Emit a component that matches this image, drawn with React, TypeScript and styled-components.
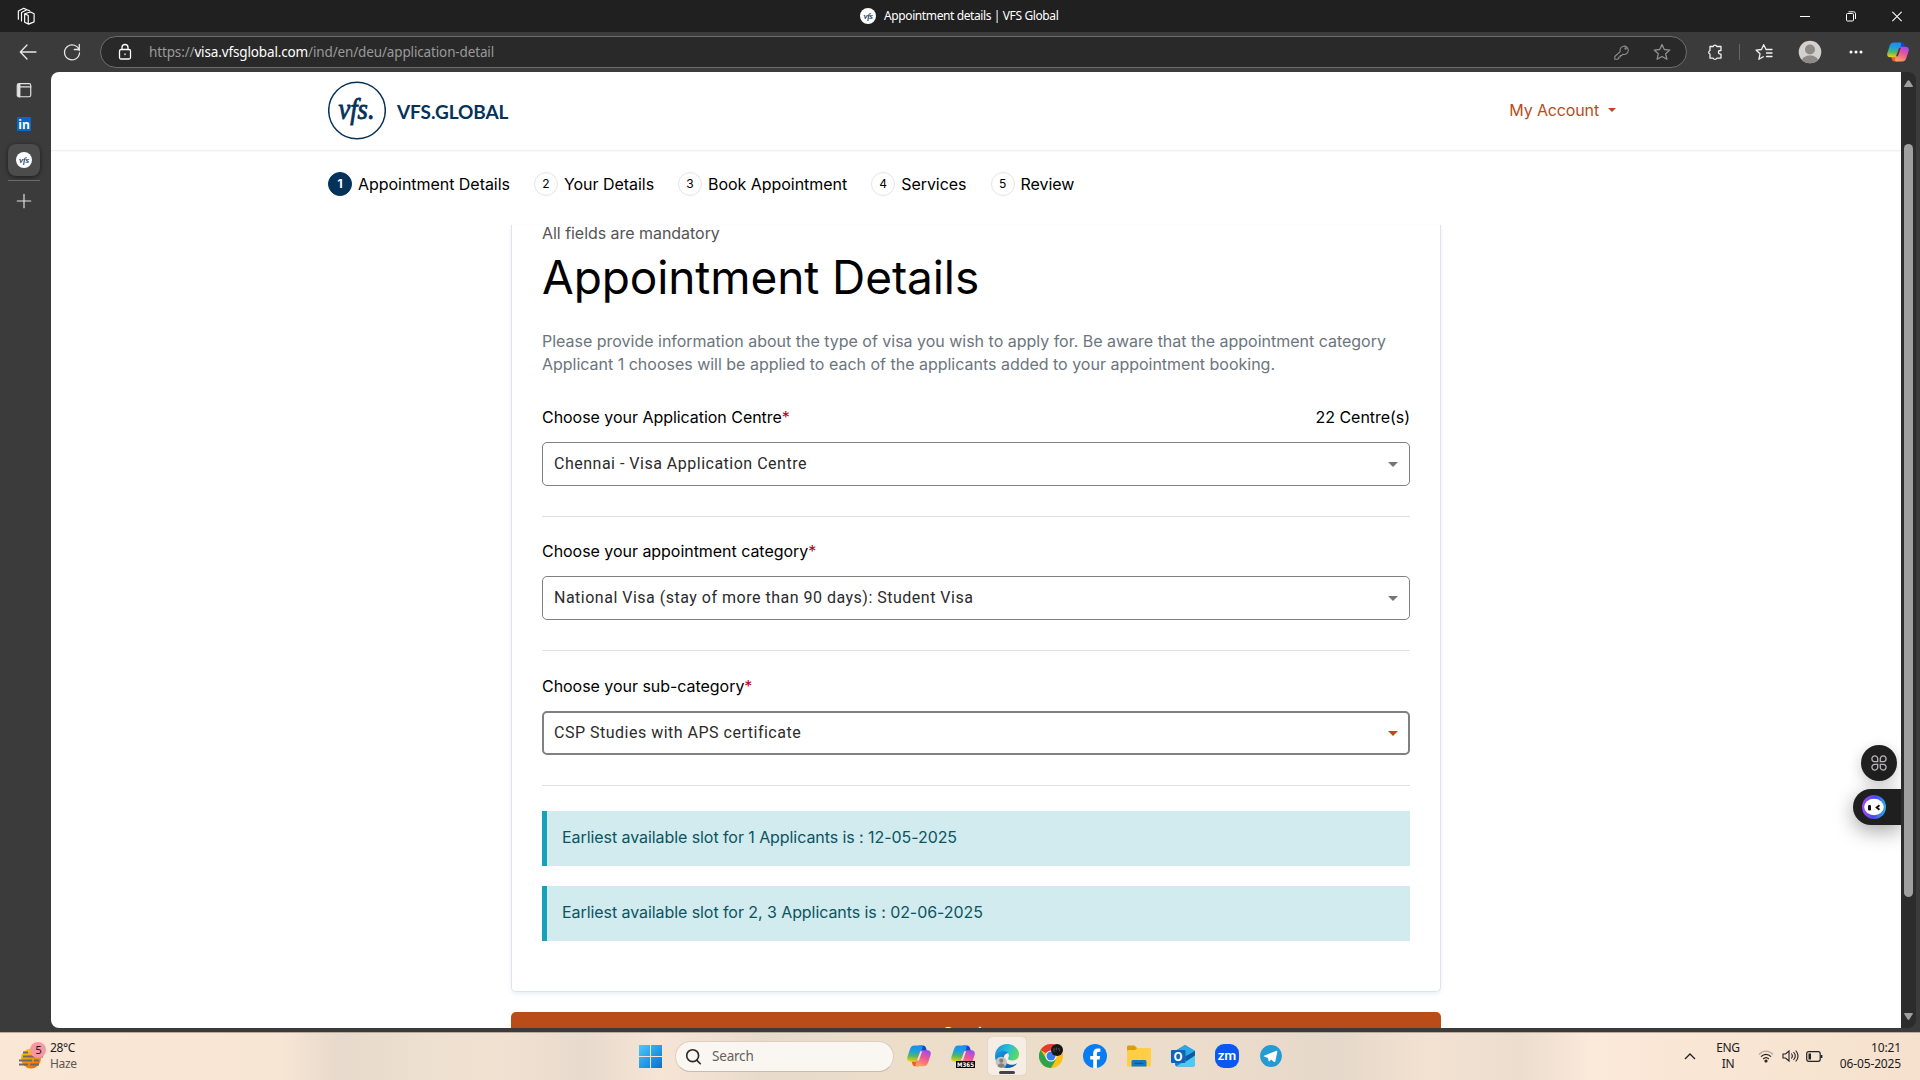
import React from "react";
import styled, { createGlobalStyle, css } from "styled-components";

const ui = `"Noto Sans", "Open Sans", sans-serif`;
const body = `Inter, "Liberation Sans", sans-serif`;
const navy = "#05325b";
const orange = "#b94c19";

const Global = createGlobalStyle`
  * { box-sizing: border-box; }
  html, body { margin: 0; padding: 0; overflow: hidden; }
  body { background: #3b3b3b; }
`;

const Screen = styled.div`
  width: 1920px;
  height: 1080px;
  display: flex;
  flex-direction: column;
  overflow: hidden;
  background: #3b3b3b;
  font-family: ${body};
`;

/* ---------- browser chrome ---------- */
const TitleBar = styled.header`
  height: 32px;
  flex: none;
  display: grid;
  grid-template-columns: 860px 1fr 138px;
  align-items: center;
  background: #202020;
  color: #fff;
`;
const WorkspaceSlot = styled.div`
  padding-left: 17px;
  display: flex;
`;
const TabTitle = styled.div`
  display: flex;
  align-items: center;
  gap: 8px;
  font: 12px/16px ${ui};
  letter-spacing: -0.39px;
  white-space: nowrap;
`;
const WindowButtons = styled.div`
  display: flex;
`;
const WindowButton = styled.span`
  width: 46px;
  display: flex;
  justify-content: center;
`;
const Toolbar = styled.div`
  height: 40px;
  flex: none;
  display: flex;
  align-items: center;
  background: #3b3b3b;
  color: #e8e8e8;
`;
const ToolSlot = styled.span<{ $w: number }>`
  width: ${(p) => p.$w}px;
  flex: none;
  display: flex;
  align-items: center;
  justify-content: center;
`;
const AddressBar = styled.div`
  width: 1587px;
  height: 32px;
  border: 1px solid #6d6d6d;
  border-radius: 16px;
  background: #292929;
  display: flex;
  align-items: center;
  color: #8f8f8f;
`;
const Url = styled.span`
  flex: 1;
  font: 13.5px/20px ${ui};
  letter-spacing: -0.14px;
  color: #9a9a9a;
  white-space: nowrap;
  b { font-weight: 400; color: #fff; }
`;
const Separator = styled.span`
  width: 1px;
  height: 16px;
  background: #666;
`;
const Work = styled.div`
  height: 960px;
  flex: none;
  display: flex;
  padding-bottom: 4px;
`;
const Sidebar = styled.nav`
  width: 51px;
  flex: none;
  display: flex;
  flex-direction: column;
  align-items: flex-start;
  padding: 10px 0 0 8px;
  color: #e4e4e4;
`;
const SideSlot = styled.span<{ $h: number; $active?: boolean }>`
  width: 32px;
  height: ${(p) => p.$h}px;
  display: flex;
  align-items: center;
  justify-content: center;
  border-radius: 8px;
  ${(p) => p.$active && css`
    margin-top: -6px;
    background: #4c4c4c;
    box-shadow: 0 1px 4px rgba(0, 0, 0, 0.55);
  `}
`;
const SideLine = styled.span`
  width: 32px;
  height: 1px;
  margin: 4px 0;
  background: #6b6b6b;
`;

/* ---------- page ---------- */
const Page = styled.main`
  position: relative;
  width: 1850px;
  height: 956px;
  overflow: hidden;
  background: #fff;
  border-radius: 8px 0 0 8px;
`;
const ScrollTrack = styled.div`
  width: 15px;
  height: 956px;
  background: #2c2c2c;
  border-radius: 0 8px 8px 0;
  display: flex;
  flex-direction: column;
  align-items: center;
  padding: 8px 0;
`;
const ScrollThumb = styled.div`
  width: 9px;
  height: 753px;
  margin: 57px 0 auto;
  border-radius: 5px;
  background: #9f9f9f;
`;
const SiteHeader = styled.div`
  height: 79px;
  padding: 0 285px 2px 277px;
  display: flex;
  align-items: center;
  justify-content: space-between;
  border-bottom: 1px solid #f1f1f1;
  box-shadow: 0 1px 1px #fafafa;
`;
const Brand = styled.div`
  display: flex;
  align-items: center;
  gap: 11px;
  color: ${navy};
`;
const BrandName = styled.span`
  font: 700 19px/24px Lato, sans-serif;
  letter-spacing: -0.1px;
  margin-top: 3px;
`;
const Account = styled.div`
  display: flex;
  align-items: center;
  gap: 9px;
  color: ${orange};
  font-size: 16px;
  letter-spacing: -0.14px;
`;
const Steps = styled.ol`
  height: 74px;
  margin: 0;
  padding: 0 0 9px 277px;
  list-style: none;
  display: flex;
  align-items: center;
  gap: 24px;
`;
const Step = styled.li`
  display: flex;
  align-items: center;
  gap: 6px;
  font-size: 16px;
  line-height: 24px;
  letter-spacing: -0.04px;
  color: #000;
  white-space: nowrap;
`;
const StepNo = styled.span<{ $on?: boolean }>`
  width: 24px;
  height: 24px;
  border-radius: 50%;
  display: flex;
  align-items: center;
  justify-content: center;
  font-size: 12px;
  border: 1px solid ${(p) => (p.$on ? navy : "#e4e4e4")};
  background: ${(p) => (p.$on ? navy : "#fff")};
  color: ${(p) => (p.$on ? "#fff" : "#000")};
  font-weight: ${(p) => (p.$on ? 700 : 400)};
`;
const Column = styled.div`
  width: 930px;
  margin-left: 460px;
`;
const Card = styled.section`
  height: 767px;
  padding: 0 30px;
  border: 1px solid #dfe3ec;
  border-top: 0;
  border-radius: 0 0 5px 5px;
  box-shadow: 0 2px 4px rgba(40, 70, 120, 0.09);
`;
const Hint = styled.p`
  margin: 0;
  font-size: 16px;
  line-height: 17px;
  letter-spacing: -0.04px;
  color: #555;
`;
const Heading = styled.h1`
  margin: 7px 0 0;
  font-size: 46px;
  line-height: 56px;
  letter-spacing: -0.1px;
  font-weight: 400;
  color: #000;
  white-space: nowrap;
`;
const Lead = styled.p`
  margin: 25px 0 0;
  font-size: 16px;
  line-height: 23px;
  letter-spacing: -0.01px;
  color: #6c757d;
  white-space: nowrap;
`;
const Field = styled.div<{ $h: number }>`
  height: ${(p) => p.$h}px;
  border-bottom: 1px solid #dfdfdf;
  display: flex;
  flex-direction: column;
  justify-content: flex-end;
  padding-bottom: 30px;
`;
const LabelRow = styled.div`
  display: flex;
  justify-content: space-between;
  font-size: 16px;
  line-height: 20px;
  letter-spacing: -0.04px;
  margin-bottom: 15px;
  color: #000;
`;
const Star = styled.span`
  color: #b3001b;
`;
const Select = styled.div<{ $focus?: boolean }>`
  height: 44px;
  border: ${(p) => (p.$focus ? 2 : 1)}px solid #808080;
  border-radius: 5px;
  display: flex;
  align-items: center;
  justify-content: space-between;
  padding: 0 ${(p) => (p.$focus ? 10 : 11)}px;
  font: 16px/24px Roboto, sans-serif;
  letter-spacing: 0.5px;
  color: #2b2b2b;
`;
const Caret = styled.i<{ $c: string; $w?: number }>`
  border: ${(p) => p.$w ?? 5}px solid transparent;
  border-top-color: ${(p) => p.$c};
  border-bottom: 0;
`;
const Alert = styled.div<{ $gap: number }>`
  height: 55px;
  margin-top: ${(p) => p.$gap}px;
  padding: 0 0 3px 15px;
  border-left: 5px solid #18a2b8;
  background: #d1ebef;
  color: #0c5460;
  font-size: 16px;
  letter-spacing: -0.07px;
  display: flex;
  align-items: center;
`;
const Continue = styled.button`
  display: block;
  width: 930px;
  height: 48px;
  margin-top: 20px;
  padding: 0 0 6px;
  border: 0;
  border-radius: 5px;
  background: ${orange};
  color: #fff;
  font: 16px/20px ${body};
`;
const FloatDock = styled.div`
  position: absolute;
  right: 0;
  top: 673px;
  display: flex;
  flex-direction: column;
  align-items: flex-end;
  gap: 8px;
`;
const FloatRound = styled.div`
  width: 36px;
  height: 36px;
  margin-right: 4px;
  border-radius: 50%;
  background: #1f1f1f;
  box-shadow: 0 4px 14px rgba(0, 0, 0, 0.22);
  display: flex;
  align-items: center;
  justify-content: center;
`;
const FloatTab = styled.div`
  width: 48px;
  height: 36px;
  padding-left: 9px;
  border-radius: 18px 0 0 18px;
  background: #1f1f1f;
  box-shadow: 0 6px 20px rgba(0, 0, 0, 0.35);
  display: flex;
  align-items: center;
`;

/* ---------- taskbar ---------- */
const Taskbar = styled.footer`
  height: 48px;
  flex: none;
  display: flex;
  align-items: center;
  border-top: 1px solid #b9aa9d;
  padding-bottom: 1px;
  font-family: ${ui};
  color: #1c1c1c;
  background: linear-gradient(90deg, #fae7d6 0, #f8e6d5 280px, #e7d9cb 340px, #eee0d0 420px, #f1e1d1 500px,
    #e8dacd 585px, #f6e5d5 660px, #e8dacb 765px, #ecdec9 900px, #ecdccb 1200px, #e6d8ca 1340px, #f3e2d1 1430px,
    #ecddcf 1520px, #fbe9d9 1590px, #f5e1cd 1920px);
`;
const Weather = styled.div`
  width: 639px;
  padding-left: 19px;
  display: flex;
  gap: 3px;
  align-items: center;
`;
const Small = styled.div<{ $align?: string; $w?: number; $ls?: number }>`
  font-size: 12px;
  line-height: 16px;
  letter-spacing: ${(p) => p.$ls ?? -0.35}px;
  text-align: ${(p) => p.$align ?? "left"};
  width: ${(p) => (p.$w ? `${p.$w}px` : "auto")};
  white-space: nowrap;
`;
const Muted = styled.div`
  color: #5d5751;
`;
const SearchBox = styled.div`
  width: 219px;
  height: 31px;
  margin: 0 3px 0 13px;
  padding-left: 9px;
  display: flex;
  align-items: center;
  gap: 10px;
  border-radius: 16px;
  border: 1px solid #dccfc2;
  border-bottom-color: #c9bcae;
  background: #faf6f1;
  color: #65605b;
  font-size: 13.5px;
  letter-spacing: -0.2px;
`;
const AppSlot = styled.span<{ $active?: boolean }>`
  position: relative;
  width: 38px;
  height: 38px;
  margin: 0 3px;
  border-radius: 4px;
  display: flex;
  align-items: center;
  justify-content: center;
  ${(p) => p.$active && css`
    background: #f6eee5;
    box-shadow: 0 0 1px #b8a999;
    &::after {
      content: "";
      position: absolute;
      left: 11px;
      bottom: 1px;
      width: 16px;
      height: 3px;
      border-radius: 2px;
      background: #444;
    }
  `}
`;
const Tray = styled.div`
  margin-left: auto;
  display: flex;
  align-items: center;
  padding-right: 19px;
`;

/* ---------- drawings ---------- */
const Line = ({ s = 20, w = 1.3, children, c = "currentColor" }: any) => (
  <svg width={s} height={s} viewBox="0 0 20 20" fill="none" stroke={c} strokeWidth={w} strokeLinecap="round" strokeLinejoin="round">
    {children}
  </svg>
);

const Favicon = ({ s = 16 }: { s?: number }) => (
  <svg width={s} height={s} viewBox="0 0 16 16">
    <circle cx="8" cy="8" r="8" fill="#fff" />
    <text x="8" y="10.6" textAnchor="middle" fontFamily="Liberation Serif" fontStyle="italic" fontSize="9" fill={navy} stroke={navy} strokeWidth="0.2">vfs</text>
  </svg>
);

const BrandMark = () => (
  <svg width="58" height="59" viewBox="0 0 58 59">
    <circle cx="29" cy="29.5" r="28.3" fill="none" stroke={navy} strokeWidth="1.5" />
    <text x="10.500" y="37.500" textLength="36" lengthAdjust="spacingAndGlyphs" fontFamily="Liberation Serif" fontStyle="italic" fontSize="30" fill={navy} stroke={navy} strokeWidth="0.900">vfs.</text>
  </svg>
);

const Copilot = ({ id, s = 24, label }: { id: string; s?: number; label?: boolean }) => (
  <svg width={s} height={s} viewBox="0 0 24 24">
    <defs>
      <linearGradient id={id + "a"} x1="0.4" y1="0" x2="0.3" y2="1">
        <stop offset="0" stopColor="#1b8df0" />
        <stop offset="0.35" stopColor="#1aa3d8" />
        <stop offset="0.65" stopColor="#55b860" />
        <stop offset="1" stopColor="#fbd00c" />
      </linearGradient>
      <linearGradient id={id + "b"} x1="0.7" y1="0" x2="0.3" y2="1">
        <stop offset="0" stopColor="#9b4bf0" />
        <stop offset="0.45" stopColor="#ee5597" />
        <stop offset="1" stopColor="#ffa25c" />
      </linearGradient>
    </defs>
    <path d="M12 1.500h4c1.600 0 2.500.9 3 2.500l1.200 4h-5.400z" fill="#1846c7" />
    <path d="M12 22.300H8.300c-1.600 0-2.400-.8-2.900-2.400L4.300 16h5.500z" fill="#f4582f" />
    <path d="M7.500 1.500h6.300c1.400 0 2 1 1.600 2.400l-3.500 11.400c-.5 1.600-1.500 2.500-3.100 2.500H3.500C.8 17.800-.3 15.800.4 13L3 5c.8-2.400 2.200-3.500 4.500-3.500z" fill={`url(#${id}a)`} />
    <path d="M16.500 22.300h-6.300c-1.400 0-2-1-1.600-2.400L12.100 8.700c.5-1.600 1.500-2.500 3.100-2.500h5.300c2.700 0 3.800 2 3.100 4.800L21 18.800c-.8 2.400-2.200 3.500-4.500 3.500z" fill={`url(#${id}b)`} />
    <path d="M13.300 7.300h1.800l-3.200 9.200h-2z" fill={s === 24 ? "#efe3d4" : "#3b3b3b"} />
    {label && (
      <>
        <rect x="5" y="17" width="19" height="7" fill="#000" />
        <text x="14.500" y="23" textAnchor="middle" fontFamily="DejaVu Sans" fontWeight="700" fontSize="6.300" textLength="17" lengthAdjust="spacingAndGlyphs" fill="#fff">M365</text>
      </>
    )}
  </svg>
);

const Edge = () => (
  <svg width="24" height="24" viewBox="0 0 24 24">
    <defs>
      <linearGradient id="edgeTop" x1="0" y1="0.300" x2="1" y2="0.600">
        <stop offset="0" stopColor="#1995dc" />
        <stop offset="0.500" stopColor="#27bfd8" />
        <stop offset="1" stopColor="#62dd55" />
      </linearGradient>
      <linearGradient id="edgeLow" x1="0" y1="0" x2="1" y2="1">
        <stop offset="0" stopColor="#1b9be4" />
        <stop offset="1" stopColor="#0c4f9e" />
      </linearGradient>
    </defs>
    <path d="M0 12C0 5 5.300 0 12 0s12 4.800 12 10.200c0 4-3 6.300-6.500 6.300-3 0-4.500-1-4.500-2 0-.8.900-1.200.9-3C13.900 9 11.400 7 8 7c-4.200 0-7 2.500-8 5z" fill="url(#edgeTop)" />
    <path d="M0 12c.8-3 4-5.200 8-5.200 2.600 0 4.700 1 5.500 2.500-3-.2-4.700 2.200-4.700 5 0 4.200 4 6.500 8 6.500 2.300 0 4.200-.8 5.400-1.600C20.200 22.200 16.500 24 12 24 5 24 0 18.800 0 12z" fill="url(#edgeLow)" />
    <circle cx="6.300" cy="18.300" r="5.600" fill="#c5c3c0" />
    <circle cx="6.300" cy="16.700" r="2.100" fill="#83807d" />
    <path d="M2.800 22.200c.3-4 6.700-4 7 0-2 1.900-5 1.900-7 0z" fill="#83807d" />
  </svg>
);

const Chrome = () => (
  <svg width="24" height="24" viewBox="0 0 24 24">
    <circle cx="12" cy="12" r="12" fill="#fbc116" />
    <path d="M12 12 1.600 6A12 12 0 0 1 22.400 6L12 6.500z" fill="#e33b2e" />
    <path d="M1.600 6A12 12 0 0 0 12 24l5.200-9-5.200 2.400L7 14z" fill="#2ea24c" />
    <circle cx="12" cy="12" r="5.600" fill="#fff" />
    <circle cx="12" cy="12" r="4.500" fill="#3b7ded" />
    <circle cx="18" cy="6" r="6" fill="#161616" />
    <path d="M15 4v4M17.300 3.500v2.800M19.500 4l1.300 3" stroke="#666" strokeWidth="0.800" />
  </svg>
);

const Facebook = () => (
  <svg width="24" height="24" viewBox="0 0 24 24">
    <circle cx="12" cy="12" r="12" fill="#0a7cf2" />
    <path d="M16.600 15.400l.6-3.500h-3.300V9.700c0-1 .5-1.900 2-1.900h1.500v-3s-1.400-.2-2.700-.2c-2.800 0-4.500 1.700-4.500 4.700v2.600h-3v3.500h3V24h3.700v-8.600z" fill="#fff" />
  </svg>
);

const Folder = () => (
  <svg width="24" height="24" viewBox="0 0 24 24">
    <path d="M0 3c0-1 .6-1.500 1.500-1.500h6L10 4h12.500c1 0 1.500.6 1.500 1.500V9H0z" fill="#dc9d08" />
    <path d="M0 7.500C0 6.500.5 6 1.500 6H8l2.300-2h12.200c1 0 1.500.6 1.500 1.500V21c0 1-.6 1.500-1.500 1.500h-21C.6 22.500 0 22 0 21z" fill="#fecf45" />
    <path d="M4.500 22.500v-4.800c0-1 .7-1.700 1.700-1.700h11.600c1 0 1.700.7 1.700 1.700v4.800z" fill="#1778c0" />
    <path d="M8 19.300h8" stroke="#0d5796" strokeWidth="1.300" strokeLinecap="round" />
  </svg>
);

const Outlook = () => (
  <svg width="24" height="24" viewBox="0 0 24 24">
    <path d="M4 7 14 1l10 6v13c0 1.500-.7 2.500-2 2.500H6c-1.300 0-2-1-2-2.500z" fill="#1481d0" />
    <path d="M14 1l10 6-10 8-9-8z" fill="#29a9e6" />
    <path d="M24 10v10.500c0 1.200-.8 2-2 2H5z" fill="#4cc9f5" />
    <path d="M14 12.500l10-5.500v4.500l-9 6z" fill="#0c5aa5" />
    <rect x="0" y="6" width="14.500" height="13" rx="1" fill="#0e65b8" />
    <text x="7.200" y="16.500" textAnchor="middle" fontFamily="Open Sans" fontWeight="700" fontSize="11.500" fill="#fff">O</text>
  </svg>
);

const Zoom = () => (
  <svg width="24" height="24" viewBox="0 0 24 24">
    <rect width="24" height="24" rx="9" fill="#0b57f2" />
    <text x="2.800" y="16" fontFamily="Lato" fontWeight="700" fontSize="13.500" fill="#fff" textLength="18.500" lengthAdjust="spacingAndGlyphs">zm</text>
  </svg>
);

const Telegram = () => (
  <svg width="24" height="24" viewBox="0 0 24 24">
    <circle cx="12" cy="12" r="10.900" fill="#249bd2" />
    <path d="M5 11.700 17.500 6.800c.6-.2 1 .1.800.9l-2 9.700c-.2.700-.7.800-1.200.5l-3-2.300-1.600 1.600c-.5.400-.8.100-.9-.4l-.7-2.900-3.800-1.300c-.6-.2-.6-.7-.1-.9z" fill="#fff" />
  </svg>
);

const Haze = () => (
  <svg width="28" height="28" viewBox="0 0 28 28">
    <defs>
      <linearGradient id="sun" x1="0.300" y1="0" x2="0.700" y2="1">
        <stop offset="0" stopColor="#fdc81c" />
        <stop offset="1" stopColor="#ea6a05" />
      </linearGradient>
    </defs>
    <circle cx="12" cy="16.500" r="10" fill="url(#sun)" />
    <path d="M4 10.500h5M4 14.500h14M19 14.500h5M0 18.500h13M15 18.500h5M0 22.500h9M11 22.500h9" stroke="#6f6a65" strokeWidth="1.900" />
    <circle cx="19" cy="8" r="8" fill="#fa97a3" />
    <text x="19.500" y="12" textAnchor="middle" fontFamily="Noto Sans" fontSize="11.500" fill="#1a1a1a">5</text>
  </svg>
);

const Bot = () => (
  <svg width="24" height="24" viewBox="0 0 24 24">
    <defs>
      <linearGradient id="ring" x1="0" y1="0.600" x2="1" y2="0.700">
        <stop offset="0" stopColor="#a44df0" />
        <stop offset="0.500" stopColor="#4948f2" />
        <stop offset="1" stopColor="#25b4e8" />
      </linearGradient>
    </defs>
    <circle cx="12" cy="12" r="12" fill="url(#ring)" />
    <ellipse cx="12" cy="12" rx="9.800" ry="8.300" fill="#fff" />
    <rect x="6" y="10" width="3" height="5.500" rx="1.200" fill="#111" />
    <path d="M17.500 10.300 14.700 12.500l2.800 2.200" fill="none" stroke="#111" strokeWidth="1.900" />
  </svg>
);

const STEPS = ["Appointment Details", "Your Details", "Book Appointment", "Services", "Review"];
const FIELDS = [
  { label: "Choose your Application Centre", value: "Chennai - Visa Application Centre", note: "22 Centre(s)", h: 141 },
  { label: "Choose your appointment category", value: "National Visa (stay of more than 90 days): Student Visa", h: 134 },
  { label: "Choose your sub-category", value: "CSP Studies with APS certificate", h: 135, focus: true },
];
const APPS = [<Edge />, <Chrome />, <Facebook />, <Folder />, <Outlook />, <Zoom />, <Telegram />];

export default function App() {
  return (
    <Screen>
      <Global />
      <TitleBar>
        <WorkspaceSlot>
          <Line s={18} w={1.3}>
            <path d="M8.500 7.500 15 5.500l4 2v9l-6 2.500-4.500-2zM8.500 7.500l4 2v9M5 15.500V6l6-3 3 1.200M1.500 13.500V4.500L7.500 1.500l3 1.200" />
          </Line>
        </WorkspaceSlot>
        <TabTitle><Favicon />Appointment details | VFS Global</TabTitle>
        <WindowButtons>
          <WindowButton><svg width="10" height="11"><path d="M0 5.500h10" stroke="#fff" /></svg></WindowButton>
          <WindowButton>
            <svg width="10" height="11" fill="none" stroke="#fff"><rect x=".5" y="2.500" width="7" height="7.500" rx="1" /><path d="M2.500.8h5c1.300 0 2 .7 2 2V8" /></svg>
          </WindowButton>
          <WindowButton><svg width="10" height="11"><path d="M.3.800l9.400 9.400M9.700.8.3 10.200" stroke="#fff" strokeWidth="1.200" /></svg></WindowButton>
        </WindowButtons>
      </TitleBar>

      <Toolbar>
        <ToolSlot $w={56}><Line s={20}><path d="M18 10H2.500M9 3 2.300 10 9 17" /></Line></ToolSlot>
        <ToolSlot $w={32}><Line s={20}><path d="M17.300 8.500A7.500 7.500 0 1 0 17.500 11M17.300 2.500v5h-5" /></Line></ToolSlot>
        <ToolSlot $w={12} />
        <AddressBar>
          <ToolSlot $w={48}><Line s={20} c="#fff"><rect x="4.500" y="7.500" width="11" height="9.500" rx="1.500" /><path d="M7 7.500V5.500a3 3 0 0 1 6 0v2M10 12v.5" /></Line></ToolSlot>
          <Url>https://<b>visa.vfsglobal.com</b>/ind/en/deu/application-detail</Url>
          <ToolSlot $w={40}><Line s={18} w={1.200}><path d="M8 9.500a4.600 4.600 0 1 1 3 3L9.500 14H8v1.500H6.500V17L5 18H2v-3z" /><circle cx="14" cy="6" r=".7" /></Line></ToolSlot>
          <ToolSlot $w={40}><Line s={20}><path d="M10 2.500l2.300 5 5.500.6-4.100 3.700 1.200 5.500-4.900-2.800-4.900 2.800 1.200-5.500L2.200 8.100l5.500-.6z" /></Line></ToolSlot>
          <ToolSlot $w={4} />
        </AddressBar>
        <ToolSlot $w={7} />
        <ToolSlot $w={42}>
          <Line s={20} c="#f2f2f2"><path d="M5 4.500h3.200a1.900 1.900 0 0 1 3.600 0H16V8.500h-.8a1.800 1.800 0 0 0 0 3.600h.8v4h-4.200a1.900 1.900 0 0 1-3.600 0H5v-4a1.900 1.900 0 0 1 0-3.600z" /></Line>
        </ToolSlot>
        <ToolSlot $w={6}><Separator /></ToolSlot>
        <ToolSlot $w={44}>
          <Line s={20} c="#f2f2f2"><path d="M13 7.500h-.9L9.700 2.700 7.500 7.500l-5.500.6 4 3.700L4.900 17.300l4.400-2.500M12 7.500h6M12.500 11h5.500M12.500 14.500h5.500" /></Line>
        </ToolSlot>
        <ToolSlot $w={48}>
          <svg width="24" height="24"><circle cx="12" cy="12" r="11.300" fill="#d3d1ce" /><circle cx="12" cy="9.500" r="5" fill="#8d8a87" /><path d="M4 20c1.500-6 14.500-6 16 0-4 4.300-12 4.300-16 0z" fill="#8d8a87" /></svg>
        </ToolSlot>
        <ToolSlot $w={44}><svg width="14" height="4" fill="#fff"><circle cx="2" cy="2" r="1.500" /><circle cx="7" cy="2" r="1.500" /><circle cx="12" cy="2" r="1.500" /></svg></ToolSlot>
        <ToolSlot $w={40}><Copilot id="tb" s={22} /></ToolSlot>
      </Toolbar>

      <Work>
        <Sidebar>
          <SideSlot $h={16}><Line s={18}><rect x="2.500" y="3" width="15" height="14.500" rx="2" /><path d="M3.700 4v12.500M5.200 3v14.500M5.500 6.500h12" strokeWidth="1.600" /></Line></SideSlot>
          <SideSlot $h={52}>
            <svg width="14" height="14"><rect width="14" height="14" rx="1" fill="#0a66c8" /><text x="7" y="11.500" textAnchor="middle" fontFamily="Open Sans" fontWeight="700" fontSize="12" fill="#fff">in</text></svg>
          </SideSlot>
          <SideSlot $h={32} $active><Favicon /></SideSlot>
          <SideLine />
          <SideSlot $h={31}><Line s={18}><path d="M10 2.500v15M2.500 10h15" /></Line></SideSlot>
        </Sidebar>

        <Page>
          <SiteHeader>
            <Brand><BrandMark /><BrandName>VFS.GLOBAL</BrandName></Brand>
            <Account>My Account<Caret $c={orange} $w={4} /></Account>
          </SiteHeader>
          <Steps>
            {STEPS.map((s, i) => (
              <Step key={s}><StepNo $on={i === 0}>{i + 1}</StepNo>{s}</Step>
            ))}
          </Steps>
          <Column>
            <Card>
              <Hint>All fields are mandatory</Hint>
              <Heading>Appointment Details</Heading>
              <Lead>
                Please provide information about the type of visa you wish to apply for. Be aware that the appointment category<br />
                Applicant 1 chooses will be applied to each of the applicants added to your appointment booking.
              </Lead>
              {FIELDS.map((f) => (
                <Field key={f.label} $h={f.h}>
                  <LabelRow><span>{f.label}<Star>*</Star></span><span>{f.note}</span></LabelRow>
                  <Select $focus={f.focus}>{f.value}<Caret $c={f.focus ? orange : "#757575"} /></Select>
                </Field>
              ))}
              <Alert $gap={25}>Earliest available slot for 1 Applicants is : 12-05-2025</Alert>
              <Alert $gap={20}>Earliest available slot for 2, 3 Applicants is : 02-06-2025</Alert>
            </Card>
            <Continue>Continue</Continue>
          </Column>
          <FloatDock>
            <FloatRound>
              <svg width="16" height="16" viewBox="0 0 16 16" fill="none" stroke="#b9b4b9" strokeWidth="1.300">
                <path d="M6.700 6.700H4A2.900 2.900 0 1 1 6.700 4zM9.300 6.700H12A2.900 2.900 0 1 0 9.300 4zM6.700 9.300H4A2.900 2.900 0 1 0 6.700 12zM9.300 9.300H12A2.900 2.900 0 1 1 9.300 12z" />
              </svg>
            </FloatRound>
            <FloatTab><Bot /></FloatTab>
          </FloatDock>
        </Page>
        <ScrollTrack>
          <svg width="9" height="7"><path d="M3.500.8q1-1 2 0L8.800 6q.3 1-.8 1H1Q-.1 7 .2 6z" fill="#9f9f9f" /></svg>
          <ScrollThumb />
          <svg width="9" height="7"><path d="M3.500 6.200q1 1 2 0L8.800 1Q9.100 0 8 0H1Q-.1 0 .2 1z" fill="#9f9f9f" /></svg>
        </ScrollTrack>
      </Work>

      <Taskbar>
        <Weather>
          <Haze />
          <Small>28°C<Muted>Haze</Muted></Small>
        </Weather>
        <svg width="23" height="23" viewBox="0 0 23 23">
          <defs><linearGradient id="win" x1="0" y1="0" x2="1" y2="1"><stop offset="0" stopColor="#4cc9fa" /><stop offset="1" stopColor="#0571cf" /></linearGradient></defs>
          <path d="M0 0h11v11H0zM12 0h11v11H12zM0 12h11v11H0zM12 12h11v11H12z" fill="url(#win)" />
        </svg>
        <SearchBox>
          <Line s={17} w={1.900} c="#2a2a2a"><circle cx="9" cy="9" r="7" /><path d="M14 14.500l4 4" /></Line>
          Search
        </SearchBox>
        <AppSlot><Copilot id="t1" /></AppSlot>
        <AppSlot><Copilot id="t2" label /></AppSlot>
        {APPS.map((a, i) => <AppSlot key={i} $active={i === 0}>{a}</AppSlot>)}
        <Tray>
          <ToolSlot $w={36}><svg width="12" height="7" fill="none" stroke="#222" strokeWidth="1.300"><path d="M1 6l5-5 5 5" /></svg></ToolSlot>
          <Small $align="center" $w={40}>ENG<div>IN</div></Small>
          <ToolSlot $w={36}>
            <svg width="16" height="14" viewBox="0 0 16 14" fill="none" stroke="#222" strokeWidth="1.200">
              <path d="M1 5.500c4-4.500 10-4.500 14 0" stroke="#b5aaa0" /><path d="M3 7.700c3-3.200 7-3.200 10 0M5.200 10c1.800-1.800 3.800-1.800 5.600 0" /><circle cx="8" cy="12" r="1" fill="#222" />
            </svg>
          </ToolSlot>
          <ToolSlot $w={12}>
            <svg width="17" height="14" viewBox="0 0 17 14" fill="none" stroke="#222" strokeWidth="1.100" style={{ flex: "none" }}>
              <path d="M1 5h2.500L7 2v10L3.500 9H1zM9.300 4.500c1.300 1.500 1.300 3.500 0 5M11.500 3c2.200 2.500 2.200 5.500 0 8M13.700 1.500c3 3.500 3 7.500 0 11" />
            </svg>
          </ToolSlot>
          <ToolSlot $w={36}>
            <svg width="17" height="11" fill="none" stroke="#222" strokeWidth="1.200"><rect x=".7" y=".7" width="13.500" height="9.600" rx="2" /><path d="M2.500 2.500h2.500v6H2.500z" fill="#222" stroke="none" /><path d="M15.500 4v3" strokeWidth="1.800" /></svg>
          </ToolSlot>
          <Small $align="right" $w={69} $ls={-0.15}>10:21<div>06-05-2025</div></Small>
        </Tray>
      </Taskbar>
    </Screen>
  );
}
